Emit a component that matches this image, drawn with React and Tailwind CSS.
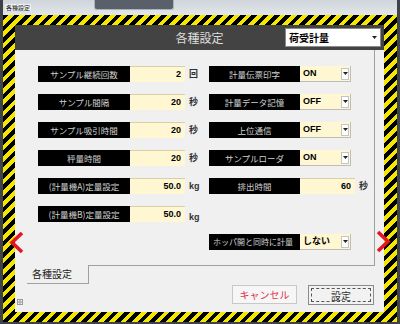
import React from 'react';

const left = [
  { label: 'サンプル継続回数', value: '2', unit: '回' },
  { label: 'サンプル間隔', value: '20', unit: '秒' },
  { label: 'サンプル吸引時間', value: '20', unit: '秒' },
  { label: '秤量時間', value: '20', unit: '秒' },
  { label: '(計量機A)定量設定', value: '50.0', unit: 'kg' },
  { label: '(計量機B)定量設定', value: '50.0', unit: 'kg', low: true },
];

const right = [
  { label: '計量伝票印字', select: 'ON' },
  { label: '計量データ記憶', select: 'OFF' },
  { label: '上位通信', select: 'OFF' },
  { label: 'サンプルローダ', select: 'ON' },
  { label: '排出時間', value: '60', unit: '秒' },
  null,
  { label: 'ホッパ開と同時に計量', select: 'しない', wide: true },
];

const Arrow = () => (
  <svg width="5" height="3" viewBox="0 0 5 3">
    <path d="M0 0 L5 0 L2.5 3 Z" fill="#222" />
  </svg>
);

const Label = ({ text, wide, w }) => (
  <div
    className={`flex h-[16px] shrink-0 items-center bg-black text-[#d0d0d0] ${w} ${
      wide ? 'justify-start pl-[4px] text-[8px]' : 'justify-center text-[8.5px]'
    }`}
  >
    {text}
  </div>
);

const Value = ({ value, unit, low }) => (
  <>
    <div className="flex h-[16px] w-[55px] items-center justify-end border-t border-[#d8cfa6] bg-[#fff7d1] pr-[4px] font-['Liberation_Sans',sans-serif] text-[9px] font-bold text-black">
      {value}
    </div>
    <span
      className={`ml-[4px] text-[9px] leading-[10px] font-bold text-[#333] ${
        low ? 'mt-[6px]' : ''
      } font-['Liberation_Sans','Noto_Sans_CJK_JP',sans-serif]`}
    >
      {unit}
    </span>
  </>
);

const Select = ({ value }) => (
  <div className="flex h-[16px] w-[51px] items-center border-r border-b border-[#bcbcbc] bg-[#fff7d1]">
    <span className="flex-1 pl-[3px] font-['Liberation_Sans','Noto_Sans_CJK_JP',sans-serif] text-[9px] font-bold text-black">
      {value}
    </span>
    <span className="mr-[1px] flex h-[12px] w-[8px] items-center justify-center border border-[#c4c4c4] bg-white">
      <Arrow />
    </span>
  </div>
);

export default function App() {
  return (
    <div className="relative flex h-[324px] w-[400px] flex-col bg-[#3e4349] px-[3px] pb-[2px] font-['Noto_Sans_CJK_JP',sans-serif]">
      {/* title bar */}
      <div className="flex h-[15px] items-start bg-gradient-to-b from-[#cfd5db] to-[#e2e6ea]">
        <span className="mt-[4px] ml-[2px] bg-[#eef0f2] px-[1px] text-[6px] leading-[7px] text-[#222]">各種設定</span>
        <div className="ml-[63px] h-[10px] w-[80px] rounded-b-[3px] border border-t-0 border-[#aab2bb] bg-[#59606a]" />
      </div>

      {/* hazard frame */}
      <div className="flex flex-1 flex-col bg-[image:repeating-linear-gradient(135deg,#000_0px,#000_4px,#f3e600_4px,#f3e600_8px)] pt-[10px] pr-[13px] pb-[10px] pl-[12px]">
        <div className="flex flex-1 flex-col">
          {/* header */}
          <div className="grid h-[25px] grid-cols-[1fr_auto_1fr] items-center bg-[#434343]">
            <div />
            <span className="text-[12px] text-[#dedede]">各種設定</span>
            <div className="flex justify-end pr-[3px]">
              <div className="flex h-[19px] w-[96px] items-center border border-[#8a8a8a] bg-white">
                <span className="flex-1 pl-[3px] text-[10px] font-bold text-black">荷受計量</span>
                <span className="mr-[2px] flex h-[14px] w-[8px] items-center justify-center">
                  <Arrow />
                </span>
              </div>
            </div>
          </div>

          {/* body */}
          <div className="relative flex flex-1 flex-col bg-[#f0f0f0]">
            <div className="mr-[9px] ml-[12px] flex h-[216px] border-r border-b border-[#a0a0a0] pt-[16px] pl-[11px]">
              <div className="flex w-[171px] flex-col">
                {left.map((r) => (
                  <div key={r.label} className="h-[28px]">
                    <div className="flex h-[16px] items-center">
                      <Label text={r.label} w="w-[92px]" />
                      <Value value={r.value} unit={r.unit} low={r.low} />
                    </div>
                  </div>
                ))}
              </div>
              <div className="flex flex-col">
                {right.map((r, i) =>
                  r ? (
                    <div key={r.label} className="h-[28px]">
                      <div className="flex h-[16px] items-center">
                        <Label text={r.label} wide={r.wide} w="w-[91px]" />
                        {r.select ? <Select value={r.select} /> : <Value value={r.value} unit={r.unit} />}
                      </div>
                    </div>
                  ) : (
                    <div key={i} className="h-[28px]" />
                  )
                )}
              </div>
            </div>

            <div className="flex items-start">
              <div className="-mt-px ml-[12px] h-[19px] w-[62px] border-r border-b border-[#a0a0a0] bg-[#f0f0f0] pt-[2px] pl-[5px] text-[10px] leading-[14px] text-[#222]">
                各種設定
              </div>
              <div className="mt-[19px] mr-[10px] ml-auto flex gap-[11px]">
                <button className="h-[19px] w-[65px] border border-[#c8c8c8] bg-[#f6f6f6] text-[10px] leading-[14px] text-[#e0304a]">
                  キャンセル
                </button>
                <div className="h-[20px] w-[66px] border border-[#8c8c8c] bg-[#f2f2f2] p-[2px]">
                  <div className="flex h-full items-center justify-center border border-dashed border-[#555] text-[10px] text-[#333]">
                    設定
                  </div>
                </div>
              </div>
            </div>

            <svg className="absolute bottom-[7px] left-[2px]" width="6" height="6" viewBox="0 0 6 6">
              <rect x="0.5" y="0.5" width="5" height="5" fill="none" stroke="#9a9a9a" />
              <path d="M0 3 H6 M3 0 V6" stroke="#9a9a9a" />
            </svg>
          </div>
        </div>
      </div>

      {/* navigation arrows */}
      <svg className="absolute top-[231px] left-[9px]" width="15" height="23" viewBox="0 0 15 23">
        <path d="M13 2 L3 11.5 L13 21" fill="none" stroke="#e3161f" strokeWidth="3.6" />
      </svg>
      <svg className="absolute top-[230px] left-[376px]" width="15" height="23" viewBox="0 0 15 23">
        <path d="M2 2 L12 11.5 L2 21" fill="none" stroke="#e3161f" strokeWidth="3.6" />
      </svg>
    </div>
  );
}
